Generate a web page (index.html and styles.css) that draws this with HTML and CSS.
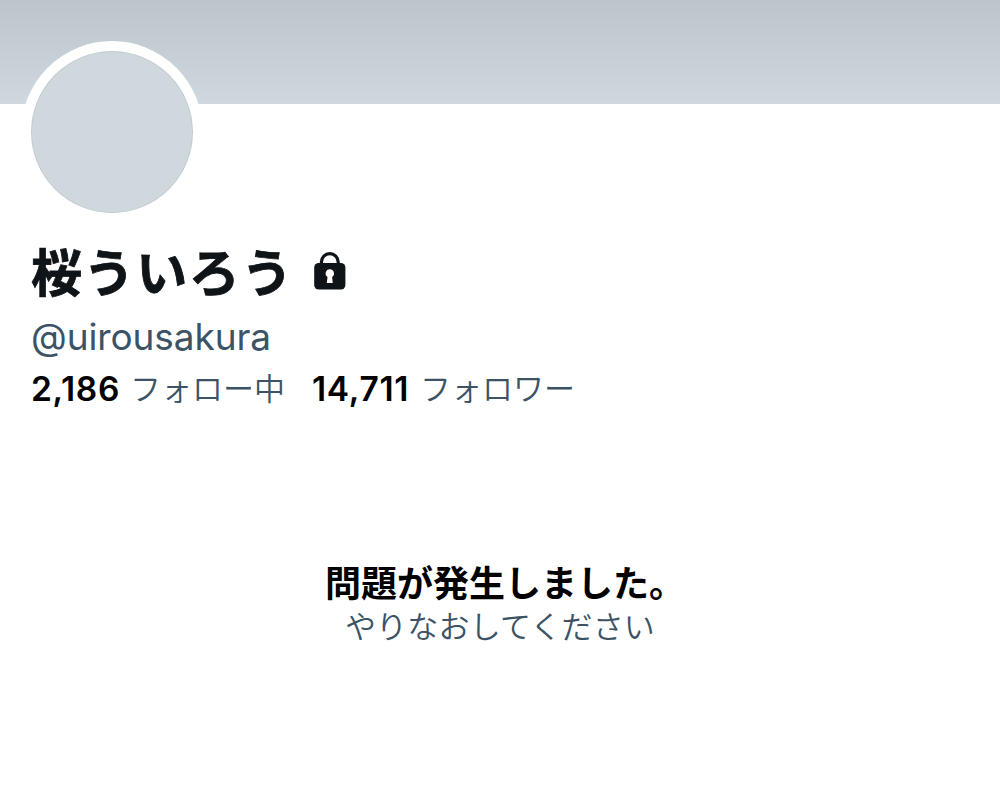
FILE: index.html
```html
<!doctype html>
<html lang="ja">
<head>
    <meta charset="utf-8">
    <meta name="viewport" content="width=device-width, initial-scale=1.0">
    <title>桜ういろう</title>
    <link rel="stylesheet" href="styles.css">
</head>
<body>

<div class="banner"></div>
<div class="profile">
    <div class="avatar"></div>
    <h1 class="name">
        <span>桜ういろう</span>
        <svg class="lock" viewBox="0 0 32 38" width="32" height="38">
            <path d="M7.4 14V10a8.4 8.4 0 0 1 16.8 0V14" fill="none" stroke="#0f1419" stroke-width="3.2"/>
            <rect x="0.2" y="11" width="31.2" height="26.6" rx="4.5" fill="#0f1419"/>
            <path d="M15.8 17.2a4.2 4.2 0 0 1 2.3 7.7l.7 6.1h-6l.7-6.1a4.2 4.2 0 0 1 2.3-7.7z" fill="#fff"/>
        </svg>
    </h1>
    <p class="account">@uirousakura</p>
    <ul class="counts">
        <li><b class="following">2,186</b><span>フォロー中</span></li>
        <li><b class="followers">14,711</b><span>フォロワー</span></li>
    </ul>
</div>
<div class="error">
    <h2>問題が発生しました。</h2>
    <p>やりなおしてください</p>
</div>

</body>
</html>
```

FILE: styles.css
```css
*{margin: 0; padding: 0; box-sizing: border-box;}
html,body{width: 100%; height: 100%; overflow: hidden;}
body{background: #fff; color: #0f1419; font-family: Inter, "Noto Sans CJK JP", sans-serif;}
.banner{height: 104px; background: linear-gradient(#bdc5cc, #cfd8de);}
.profile{padding-left: 31px;}
.avatar{width: 182px; height: 182px; margin: -63px 0 0 -10px; border: 10px solid #fff; border-radius: 50%; background: #cfd8dd; box-shadow: inset 0 0 0 1px #c2cbd0; position: relative;}
.name{display: flex; align-items: center; height: 70px; margin-top: 13px; font-size: 51px; line-height: 70px; font-weight: 700;}
.name span{width: 283px; padding-top: 5px; letter-spacing: 1.6px; white-space: nowrap; -webkit-text-stroke: .8px #0f1419;}
.lock{display: block;}
.account{height: 50px; margin-top: 6px; line-height: 50px; font-size: 37px; letter-spacing: -.1px; color: #3b5364;}
.counts{display: flex; gap: 27px; height: 50px; margin-top: 2px; line-height: 50px; list-style: none;}
.counts li{display: flex;}
.counts b{font-size: 33.5px; font-weight: 600; letter-spacing: .7px; color: #000;}
.counts .following{width: 99px;}
.counts .followers{width: 108px;}
.counts span{font-size: 31px; font-weight: 350; color: #3b5364;}
.error{margin-top: 145px; text-align: center; white-space: nowrap;}
.error h2{height: 50px; padding-left: 10px; line-height: 50px; font-size: 36px; font-weight: 700; color: #000;}
.error p{height: 40px; line-height: 36px; font-size: 31px; font-weight: 350; letter-spacing: .2px; color: #3b5364;}
```
